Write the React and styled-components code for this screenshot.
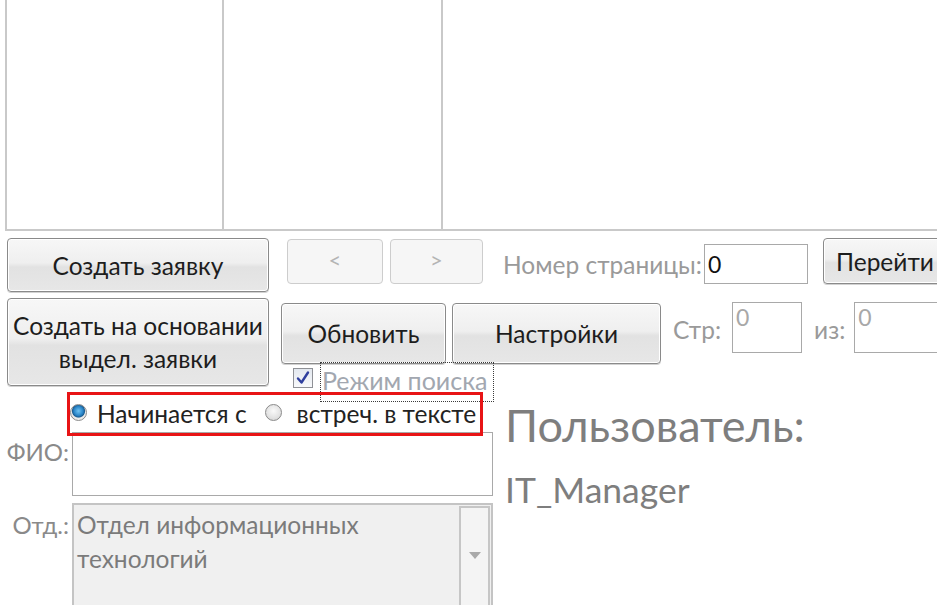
import React from "react";
import styled, { createGlobalStyle, css } from "styled-components";

const GlobalStyle = createGlobalStyle`
  html, body {
    margin: 0;
    padding: 0;
    background: #ffffff;
    overflow: hidden;
  }
  * { box-sizing: border-box; }
`;

const FONT = `Lato, "Open Sans", "Noto Sans", sans-serif`;

const Page = styled.div`
  width: 937px;
  height: 605px;
  overflow: hidden;
  font-family: ${FONT};
  background: #fff;
`;

/* ---------- top grid (datasheet) ---------- */
const Sheet = styled.div`
  margin-left: 5px;
  width: 955px;
  height: 231px;
  display: grid;
  grid-template-columns: 217px 219px 1fr;
  border-left: 2px solid #c9c9c9;
  border-bottom: 2px solid #c9c9c9;
`;

const SheetCol = styled.div`
  background: #fff;
  border-right: ${(p) => (p.$last ? "none" : "2px solid #c9c9c9")};
`;

/* ---------- buttons ---------- */
const FormButton = styled.button`
  width: ${(p) => p.$w}px;
  height: ${(p) => p.$h}px;
  margin: 0;
  padding: 0;
  border: 1px solid #8a8a8a;
  border-radius: 4px;
  background: linear-gradient(
    to bottom,
    #f7f7f7 0%,
    #efefef 46%,
    #e2e2e2 54%,
    #e7e7e7 100%
  );
  box-shadow: inset 0 0 0 1px #ffffff, 0 1px 0 #d2d2d2;
  font-family: ${FONT};
  font-size: 24.5px;
  line-height: 33px;
  color: #1d1d1d;
  text-align: center;
  white-space: nowrap;
  flex: none;
`;

const NavButton = styled.button`
  width: ${(p) => p.$w}px;
  height: 45px;
  margin: 0;
  padding: 0 0 4px;
  border: 1px solid #cdcdcd;
  border-radius: 4px;
  background: #f6f6f6;
  font-family: ${FONT};
  font-size: 22px;
  color: #b4b4b4;
  flex: none;
`;

/* ---------- layout bands ---------- */
const Band = styled.div`
  display: flex;
  margin-top: 7px;
  height: 164px;
`;

const LeftButtons = styled.div`
  margin-left: 7px;
  width: 262px;
  display: flex;
  flex-direction: column;
  gap: 6px;
`;

const RightArea = styled.div`
  margin-left: 12px;
  display: flex;
  flex-direction: column;
`;

const NavRow = styled.div`
  display: flex;
  align-items: flex-start;
  height: 46px;
`;

const NavPair = styled.div`
  display: flex;
  gap: 7px;
  margin-left: 6px;
  margin-top: 1px;
`;

const GrayLabel = styled.span`
  font-family: ${FONT};
  font-size: 24.5px;
  line-height: 30px;
  color: #9a9a9a;
  white-space: nowrap;
  flex: none;
`;

const PageLabel = styled(GrayLabel)`
  margin-left: 20px;
  margin-top: 12px;
  width: 201px;
`;

const TextBox = styled.div`
  width: ${(p) => p.$w}px;
  height: ${(p) => p.$h}px;
  border: 1px solid #a9a9a9;
  background: #fff;
  font-family: ${FONT};
  font-size: 23px;
  color: ${(p) => p.$color || "#111"};
  padding: 0 3px;
  line-height: ${(p) => p.$lh || "38px"};
  flex: none;
`;

const ActionRow = styled.div`
  display: flex;
  align-items: flex-start;
  margin-top: 18px;
  height: 62px;
`;

const SmallLabel = styled(GrayLabel)`
  margin-left: ${(p) => p.$ml}px;
  margin-top: 13px;
  margin-right: ${(p) => p.$mr}px;
`;

const SearchRow = styled.div`
  display: flex;
  align-items: flex-start;
  margin-top: -2px;
  margin-left: 12px;
  height: 40px;
`;

const CheckBox = styled.span`
  width: 20px;
  height: 20px;
  margin-top: 6px;
  border: 1px solid #8f9196;
  background: linear-gradient(to bottom, #e3e8ef, #f8f9fb);
  display: flex;
  align-items: center;
  justify-content: center;
  flex: none;
`;

const FocusLabel = styled.span`
  margin-left: 7px;
  width: 174px;
  height: 40px;
  border: 1px dotted #3a3a3a;
  padding-left: 1px;
  font-family: ${FONT};
  font-size: 25px;
  line-height: 34px;
  color: #a2a7b0;
  white-space: nowrap;
  overflow: hidden;
`;

/* ---------- lower section ---------- */
const Lower = styled.div`
  display: flex;
  margin-top: -10px;
`;

const FieldsCol = styled.div`
  width: 494px;
  display: flex;
  flex-direction: column;
`;

const RadioFrame = styled.div`
  margin-left: 67px;
  width: 416px;
  height: 44px;
  border: 3px solid #e81416;
  display: flex;
  align-items: center;
  position: relative;
  z-index: 2;
`;

const Radio = styled.span`
  width: 17px;
  height: 17px;
  border-radius: 50%;
  border: 1px solid #8a8a8a;
  flex: none;
  margin-left: ${(p) => p.$ml}px;
  margin-top: -3px;
  ${(p) =>
    p.$on
      ? css`
          background: radial-gradient(
            circle at 50% 40%,
            #6fc3f3 0%,
            #2a86c9 38%,
            #1b5f95 52%,
            #e8e8e8 60%,
            #f6f6f6 100%
          );
        `
      : css`
          background: radial-gradient(
            circle at 50% 40%,
            #fafafa 0%,
            #e4e4e4 55%,
            #d0d0d0 100%
          );
        `}
`;

const RadioText = styled.span`
  margin-left: ${(p) => p.$ml}px;
  font-family: ${FONT};
  font-size: 24.5px;
  line-height: 30px;
  color: #222222;
  white-space: nowrap;
`;

const FieldRow = styled.div`
  display: flex;
  align-items: flex-start;
  margin-top: ${(p) => p.$mt}px;
`;

const FieldLabel = styled.span`
  width: 72px;
  padding-right: 3px;
  padding-top: ${(p) => p.$pt}px;
  text-align: right;
  font-family: ${FONT};
  font-size: 24px;
  line-height: 30px;
  color: #8a8a8a;
  white-space: nowrap;
  flex: none;
`;

const Combo = styled.div`
  width: 421px;
  height: 112px;
  border: 2px solid #c4c4c4;
  background: #f0f0f0;
  display: flex;
  flex: none;
`;

const ComboText = styled.div`
  flex: 1;
  padding: 3px 3px;
  font-family: ${FONT};
  font-size: 24.5px;
  line-height: 34px;
  color: #7b7b7b;
  white-space: nowrap;
`;

const ComboButton = styled.div`
  width: 31px;
  margin: 1px 1px 0 0;
  border: 2px solid #c6c6c6;
  background: #f4f4f4;
  display: flex;
  align-items: center;
  justify-content: center;
  padding-bottom: 8px;
`;

const UserCol = styled.div`
  margin-left: 11px;
  padding-top: 8px;
  display: flex;
  flex-direction: column;
`;

const UserTitle = styled.div`
  font-family: ${FONT};
  font-size: 45px;
  line-height: 50px;
  color: #7e7e7e;
  white-space: nowrap;
`;

const UserName = styled.div`
  margin-top: 19px;
  font-family: ${FONT};
  font-size: 35.5px;
  line-height: 42px;
  color: #7e7e7e;
  white-space: nowrap;
`;

export default function App() {
  return (
    <Page>
      <GlobalStyle />
      <Sheet>
        <SheetCol />
        <SheetCol />
        <SheetCol $last />
      </Sheet>

      <Band>
        <LeftButtons>
          <FormButton $w={262} $h={54}>Создать заявку</FormButton>
          <FormButton $w={262} $h={88}>
            Создать на основании
            <br />
            выдел. заявки
          </FormButton>
        </LeftButtons>

        <RightArea>
          <NavRow>
            <NavPair>
              <NavButton $w={96}>&lt;</NavButton>
              <NavButton $w={93}>&gt;</NavButton>
            </NavPair>
            <PageLabel>Номер страницы:</PageLabel>
            <TextBox $w={104} $h={40} style={{ marginTop: 6 }}>0</TextBox>
            <FormButton $w={124} $h={46} style={{ marginLeft: 15 }}>
              Перейти
            </FormButton>
          </NavRow>

          <ActionRow>
            <FormButton $w={165} $h={61} style={{ marginTop: 1 }}>
              Обновить
            </FormButton>
            <FormButton $w={209} $h={61} style={{ marginLeft: 6, marginTop: 1 }}>
              Настройки
            </FormButton>
            <SmallLabel $ml={12} $mr={11}>Стр:</SmallLabel>
            <TextBox $w={70} $h={51} $color="#a8a8a8" $lh="28px">0</TextBox>
            <SmallLabel $ml={12} $mr={9}>из:</SmallLabel>
            <TextBox $w={90} $h={51} $color="#a8a8a8" $lh="28px">0</TextBox>
          </ActionRow>

          <SearchRow>
            <CheckBox>
              <svg width="16" height="16" viewBox="0 0 16 16">
                <path
                  d="M3 8.5 L6.5 12.5 L13 2.5"
                  fill="none"
                  stroke="#2f3f9e"
                  strokeWidth="2.4"
                  strokeLinecap="round"
                  strokeLinejoin="round"
                />
              </svg>
            </CheckBox>
            <FocusLabel>Режим поиска</FocusLabel>
          </SearchRow>
        </RightArea>
      </Band>

      <Lower>
        <FieldsCol>
          <RadioFrame>
            <Radio $on $ml={0} />
            <RadioText $ml={10}>Начинается с</RadioText>
            <Radio $ml={18} />
            <RadioText $ml={15}>встреч. в тексте</RadioText>
          </RadioFrame>

          <FieldRow $mt={-4}>
            <FieldLabel $pt={5}>ФИО:</FieldLabel>
            <TextBox $w={421} $h={64} />
          </FieldRow>

          <FieldRow $mt={7}>
            <FieldLabel $pt={7}>Отд.:</FieldLabel>
            <Combo>
              <ComboText>
                Отдел информационных
                <br />
                технологий
              </ComboText>
              <ComboButton>
                <svg width="12" height="7" viewBox="0 0 12 7">
                  <path d="M0 0 H12 L6 7 Z" fill="#a9a9a9" />
                </svg>
              </ComboButton>
            </Combo>
          </FieldRow>
        </FieldsCol>

        <UserCol>
          <UserTitle>Пользователь:</UserTitle>
          <UserName>IT_Manager</UserName>
        </UserCol>
      </Lower>
    </Page>
  );
}
